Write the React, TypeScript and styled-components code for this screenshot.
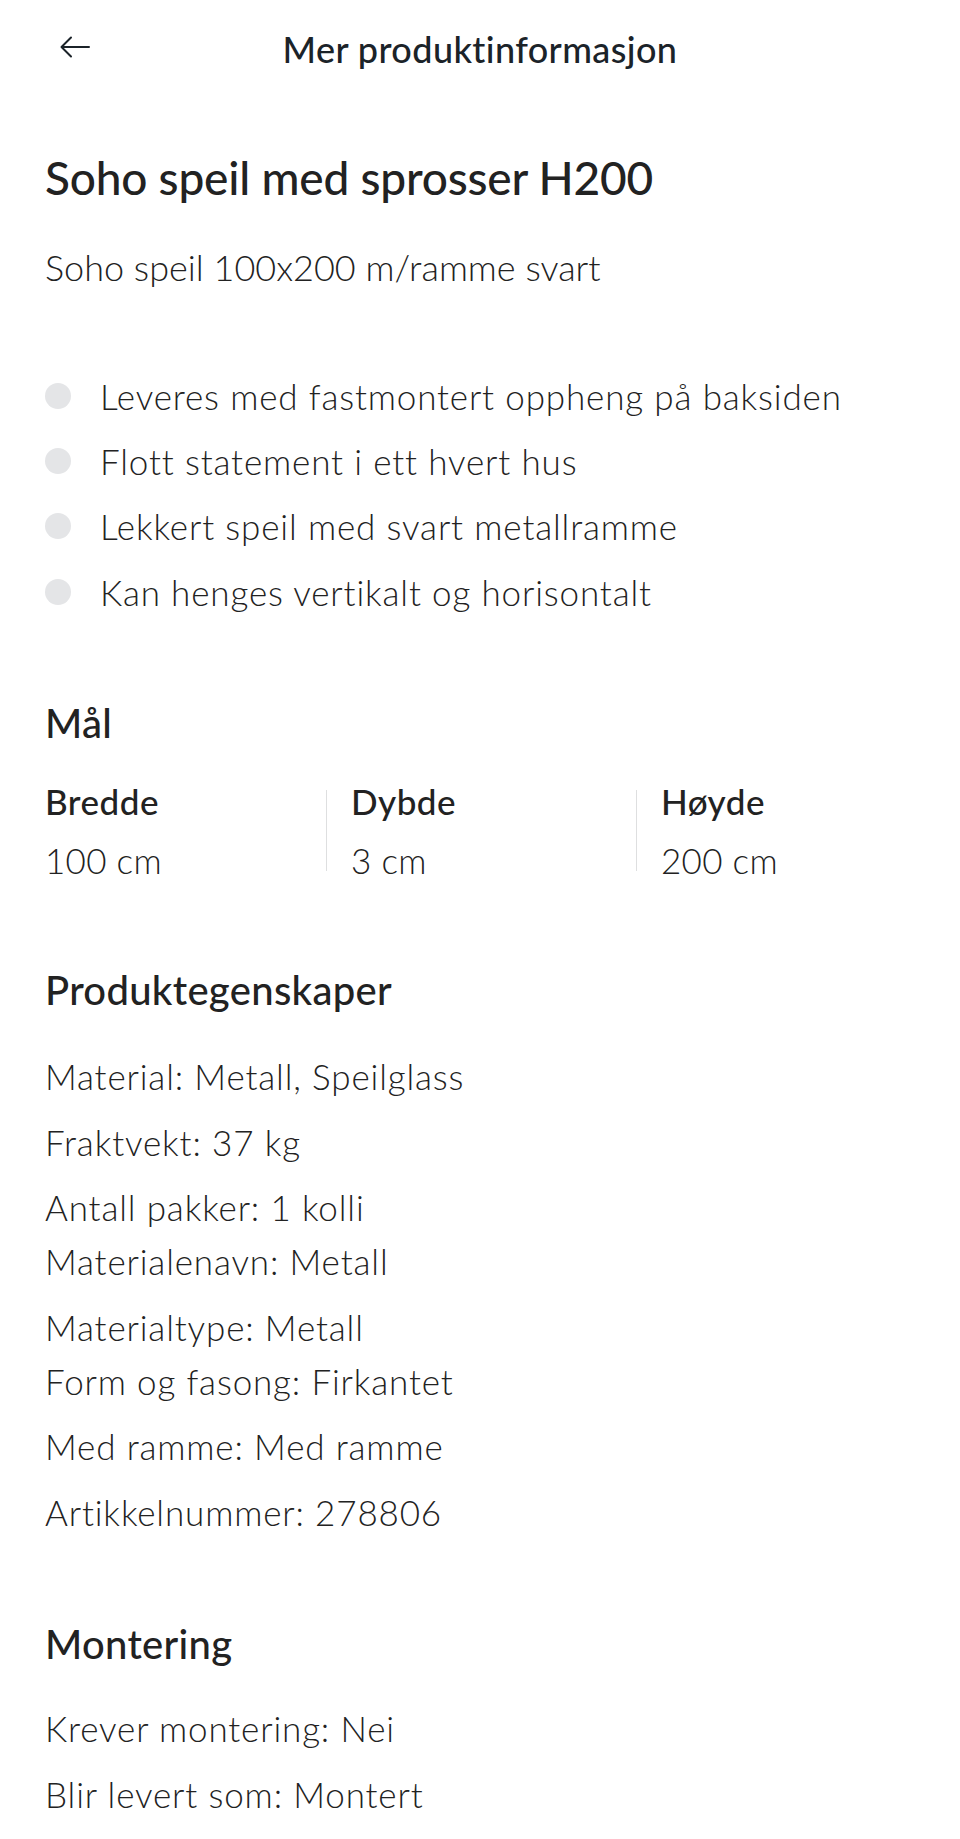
import React from "react";
import styled, { createGlobalStyle } from "styled-components";

const GlobalStyle = createGlobalStyle`
  html, body { margin: 0; padding: 0; background: #ffffff; }
  body {
    font-family: "Lato", "Noto Sans", sans-serif;
    color: #222222;
    -webkit-font-smoothing: antialiased;
  }
  * { box-sizing: border-box; }
`;

const Page = styled.div`
  width: 960px;
  min-height: 1839px;
  background: #ffffff;
`;

const Header = styled.header`
  height: 96px;
  display: grid;
  grid-template-columns: 120px 1fr 120px;
  align-items: center;
  padding: 0 0 0 60px;
`;

const BackButton = styled.button`
  width: 32px;
  height: 32px;
  padding: 0;
  border: none;
  background: none;
  display: flex;
  align-items: center;
  justify-content: flex-start;
  color: #1b2329;
  margin-top: -2px;
`;

const HeaderTitle = styled.h1`
  margin: 0;
  text-align: center;
  font-size: 36px;
  font-weight: 500;
  line-height: 44px;
  color: #1b2329;
  letter-spacing: 0.4px;
  margin-left: -60px;
  margin-top: 2px;
`;

const Main = styled.main`
  padding: 0 45px;
`;

const Title = styled.h2`
  margin: 52px 0 0;
  font-size: 46px;
  font-weight: 500;
  line-height: 60px;
  color: #222222;
  letter-spacing: -0.2px;
`;

const Subtitle = styled.p`
  margin: 35px 0 0;
  font-size: 36px;
  font-weight: 300;
  line-height: 48px;
  color: #222222;
`;

const Bullets = styled.ul`
  list-style: none;
  margin: 72px 0 0;
  padding: 0;
`;

const Bullet = styled.li`
  display: flex;
  align-items: center;
  height: 65.3px;
  font-size: 35px;
  font-weight: 300;
  letter-spacing: 0.85px;
  color: #222222;
  &::before {
    content: "";
    flex: none;
    width: 26px;
    height: 26px;
    border-radius: 50%;
    background: #e4e5e7;
    margin-right: 29px;
  }
`;

const SectionTitle = styled.h3<{ $gap: number }>`
  margin: ${(p) => p.$gap}px 0 0;
  font-size: 40px;
  font-weight: 500;
  line-height: 48px;
  color: #222222;
  letter-spacing: 0.3px;
`;

const Dimensions = styled.div`
  margin-top: 43px;
  display: grid;
  grid-template-columns: 281px 310px 1fr;
`;

const Dimension = styled.div<{ $divider?: boolean }>`
  display: flex;
  flex-direction: column;
  gap: 37px;
  padding-left: ${(p) => (p.$divider ? "24px" : "0")};
  border-left: ${(p) => (p.$divider ? "1.5px solid #dedfe0" : "none")};
`;

const DimLabel = styled.span`
  font-size: 35px;
  font-weight: 500;
  line-height: 22px;
  letter-spacing: 0.5px;
  color: #222222;
`;

const DimValue = styled.span`
  font-size: 35px;
  font-weight: 300;
  line-height: 22px;
  letter-spacing: 0.3px;
  color: #222222;
`;

const Properties = styled.div<{ $gap: number }>`
  margin-top: ${(p) => p.$gap}px;
  display: flex;
  flex-direction: column;
  gap: 11.5px;
`;

const Property = styled.p`
  margin: 0;
  font-size: 35px;
  font-weight: 300;
  line-height: 54px;
  letter-spacing: 0.85px;
  color: #222222;
`;

const ArrowIcon = () => (
  <svg width="30" height="22" viewBox="0 0 30 22" fill="none">
    <path
      d="M29 11H2M11 1.5L1.5 11L11 20.5"
      stroke="currentColor"
      strokeWidth="2"
      strokeLinecap="round"
      strokeLinejoin="round"
    />
  </svg>
);

const bullets = [
  "Leveres med fastmontert oppheng på baksiden",
  "Flott statement i ett hvert hus",
  "Lekkert speil med svart metallramme",
  "Kan henges vertikalt og horisontalt",
];

const dimensions = [
  { label: "Bredde", value: "100 cm" },
  { label: "Dybde", value: "3 cm" },
  { label: "Høyde", value: "200 cm" },
];

const properties: string[][] = [
  ["Material: Metall, Speilglass"],
  ["Fraktvekt: 37 kg"],
  ["Antall pakker: 1 kolli", "Materialenavn: Metall"],
  ["Materialtype: Metall", "Form og fasong: Firkantet"],
  ["Med ramme: Med ramme"],
  ["Artikkelnummer: 278806"],
];

const mounting: string[][] = [["Krever montering: Nei"], ["Blir levert som: Montert"]];

const PropertyList = ({ items, gap }: { items: string[][]; gap: number }) => (
  <Properties $gap={gap}>
    {items.map((lines, i) => (
      <Property key={i}>
        {lines.map((line, j) => (
          <React.Fragment key={j}>
            {j > 0 && <br />}
            {line}
          </React.Fragment>
        ))}
      </Property>
    ))}
  </Properties>
);

export default function App() {
  return (
    <Page>
      <GlobalStyle />
      <Header>
        <BackButton aria-label="Tilbake">
          <ArrowIcon />
        </BackButton>
        <HeaderTitle>Mer produktinformasjon</HeaderTitle>
        <span />
      </Header>
      <Main>
        <Title>Soho speil med sprosser H200</Title>
        <Subtitle>Soho speil 100x200 m/ramme svart</Subtitle>
        <Bullets>
          {bullets.map((b) => (
            <Bullet key={b}>{b}</Bullet>
          ))}
        </Bullets>

        <SectionTitle $gap={75}>Mål</SectionTitle>
        <Dimensions>
          {dimensions.map((d, i) => (
            <Dimension key={d.label} $divider={i > 0}>
              <DimLabel>{d.label}</DimLabel>
              <DimValue>{d.value}</DimValue>
            </Dimension>
          ))}
        </Dimensions>

        <SectionTitle $gap={95}>Produktegenskaper</SectionTitle>
        <PropertyList items={properties} gap={35} />

        <SectionTitle $gap={81.5}>Montering</SectionTitle>
        <PropertyList items={mounting} gap={33} />
      </Main>
    </Page>
  );
}
